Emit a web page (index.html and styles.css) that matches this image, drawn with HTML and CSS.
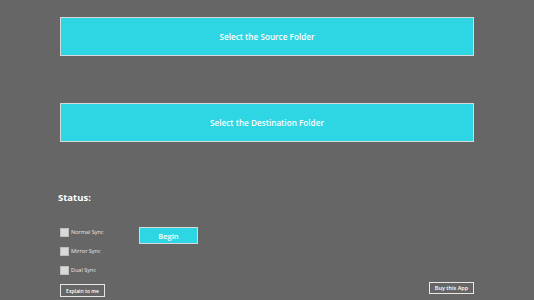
FILE: index.html
```html
<!DOCTYPE html>
<html lang="en">
<head>
    <meta charset="UTF-8">
    <title>Folder Sync</title>
    <link rel="stylesheet" href="styles.css">
</head>
<body>
    <div id="content">
        <button class="folder first">Select the Source Folder</button>
        <button class="folder">Select the Destination Folder</button>
        <h2 class="status">Status:</h2>
        <div class="options">
            <div class="modes">
                <label><span class="box"></span>Normal Sync</label>
                <label><span class="box"></span>Mirror Sync</label>
                <label><span class="box"></span>Dual Sync</label>
            </div>
            <button class="begin">Begin</button>
        </div>
        <div class="bottom">
            <button class="small explain">Explain to me</button>
            <button class="small buy">Buy this App</button>
        </div>
    </div>
</body>
</html>
```

FILE: styles.css
```css
* {
    margin: 0;
    padding: 0;
    box-sizing: border-box;
}
html, body {
    background: #666666;
    height: 100%;
    overflow: hidden;
}
body {
    font-family: "Open Sans", "Noto Sans", sans-serif;
    color: #ffffff;
}
#content {
    width: 414px;
    margin-left: 60px;
    display: flex;
    flex-direction: column;
}
button {
    font-family: inherit;
    color: #ffffff;
    cursor: pointer;
}
.folder {
    height: 39px;
    background: #2ed5e3;
    border: 1px solid #d8d8d8;
    font-size: 8.2px;
    font-weight: 600;
    margin-top: 47px;
}
.folder.first {
    margin-top: 17px;
}
.status {
    font-size: 9.5px;
    font-weight: 700;
    margin-top: 49px;
    margin-left: -2px;
    line-height: 14px;
}
.options {
    display: flex;
    margin-top: 22px;
}
.modes {
    width: 79px;
    display: flex;
    flex-direction: column;
    gap: 9px;
}
.modes label {
    display: flex;
    align-items: center;
    font-size: 5.5px;
    height: 10px;
    color: #e6e6e6;
}
.box {
    width: 9px;
    height: 9px;
    background: #d9d9d9;
    border: 1px solid #bdbdbd;
    margin-right: 2px;
}
.begin {
    width: 59px;
    height: 17px;
    background: #2ed5e3;
    border: 1px solid #d8d8d8;
    font-size: 7.5px;
    font-weight: 600;
}
.bottom {
    display: flex;
    justify-content: space-between;
    align-items: flex-end;
    margin-top: 7px;
}
.small {
    background: transparent;
    border: 1px solid #e6e6e6;
    font-size: 5px;
    font-weight: 600;
    height: 13px;
}
.explain {
    width: 45px;
}
.buy {
    width: 45px;
    height: 12px;
    font-size: 5.5px;
    margin-bottom: 3px;
}
```
